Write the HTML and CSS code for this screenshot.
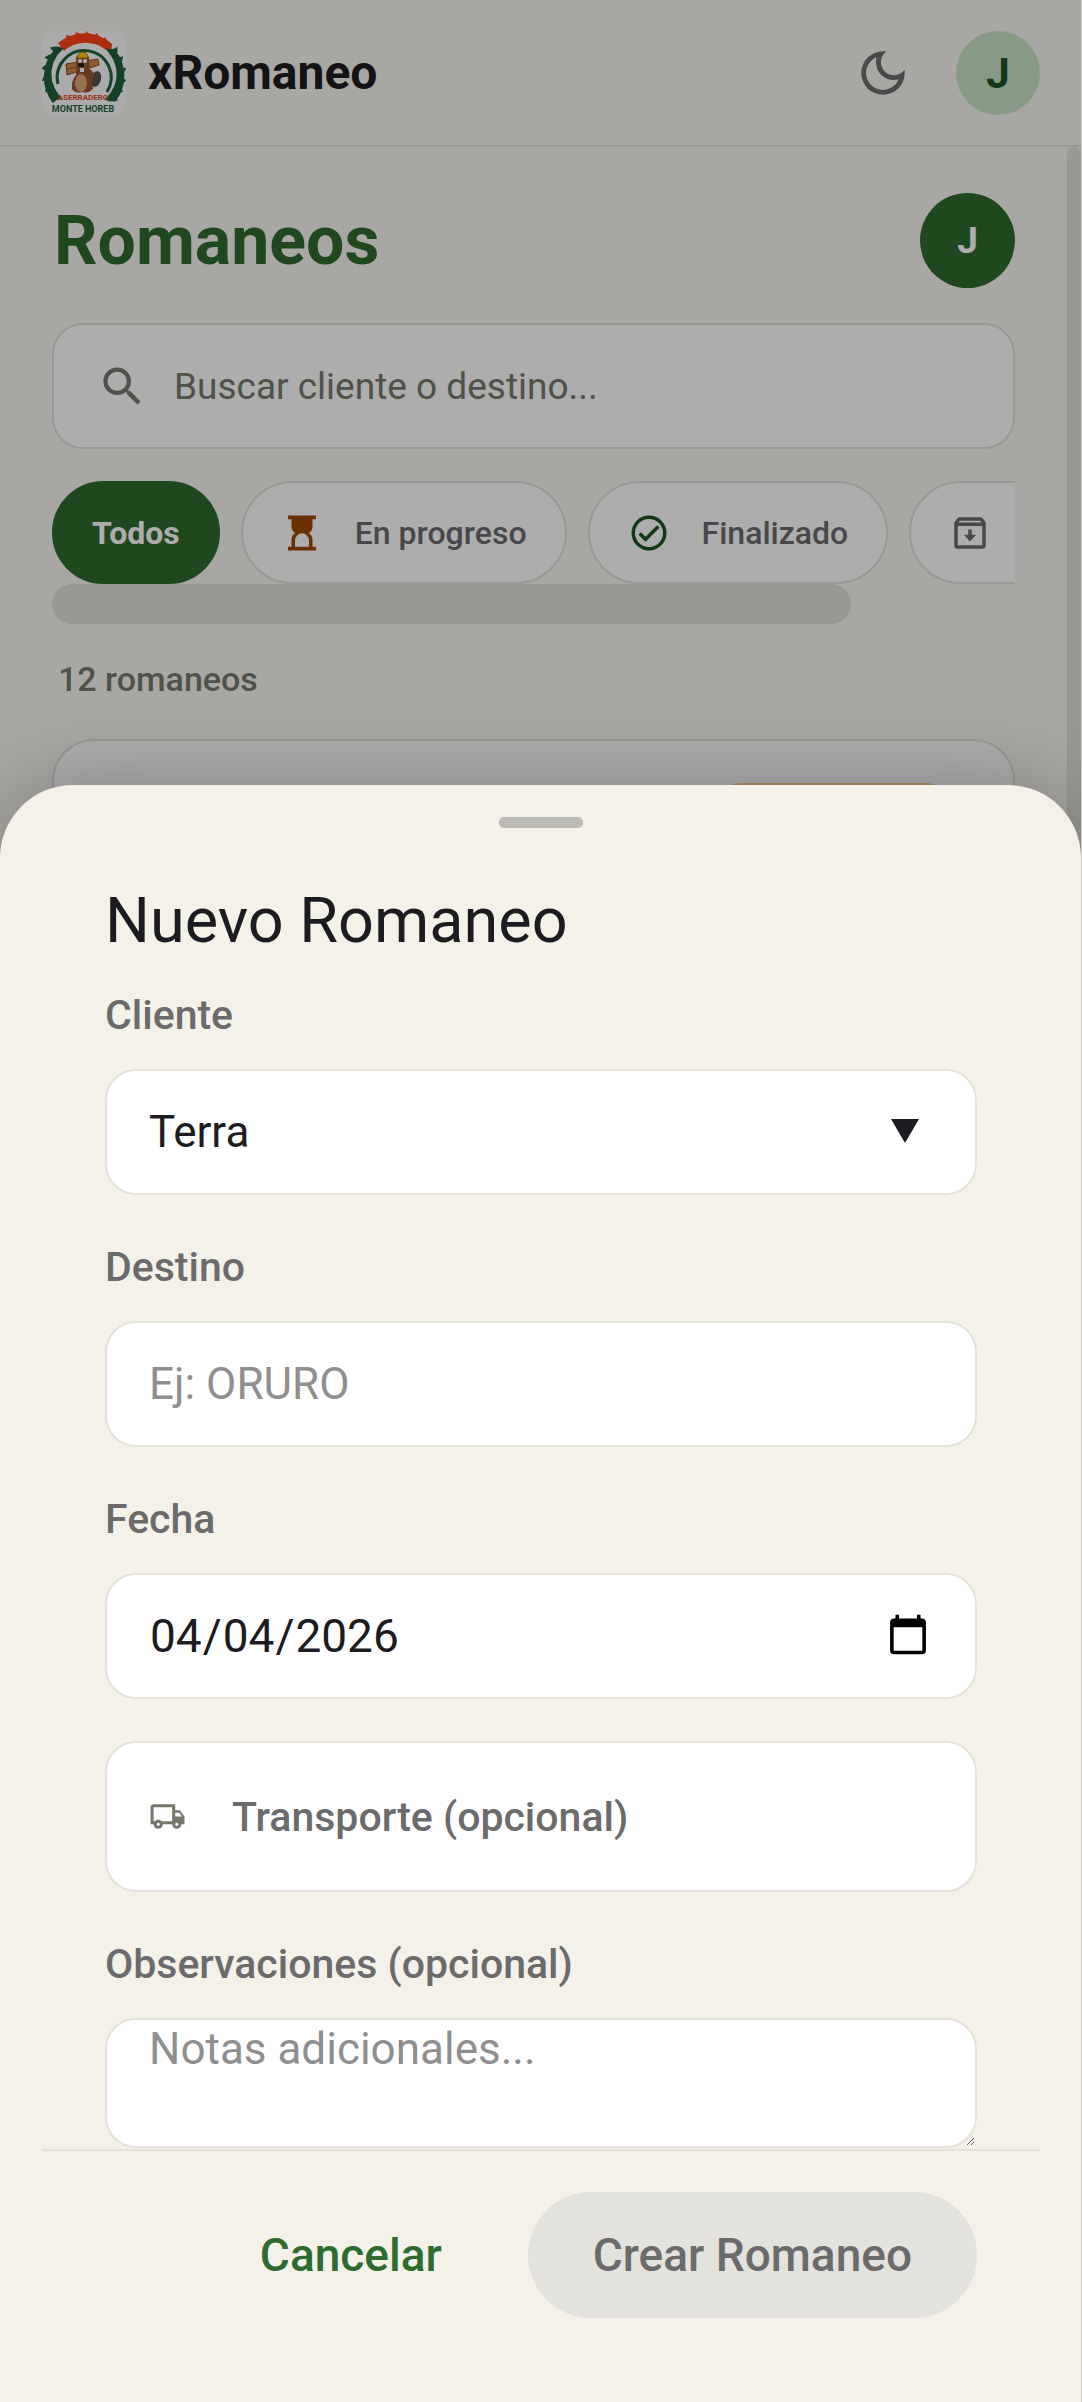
FILE: index.html
```html
<!DOCTYPE html>
<html lang="es">
<head>
  <meta charset="UTF-8" />
  <meta name="viewport" content="width=device-width, initial-scale=1" />
  <title>xRomaneo</title>
  <link rel="stylesheet" href="styles.css">
</head>
<body>
  <div class="app">
    <header class="topbar">
      <svg class="logo" viewBox="0 0 84 84" role="img" aria-label="Aserradero Monte Horeb">
        <defs>
          <path id="tooth" d="M35 10 Q41 7 41 0 Q48 4 49 11 Z" />
        </defs>
        <rect width="84" height="84" rx="16" fill="#fdfdff" />
        <!-- saw blade -->
        <g fill="#ff4417">
          <path d="M22 20 A33 33 0 0 1 63 18 L69 22 L70 13 A41 41 0 0 0 16 12 Z" />
          <use href="#tooth" transform="rotate(-24 42 43)" />
          <use href="#tooth" transform="rotate(-10 42 43)" />
          <use href="#tooth" transform="rotate(4 42 43)" />
          <use href="#tooth" transform="rotate(18 42 43)" />
          <use href="#tooth" transform="rotate(31 42 43)" />
        </g>
        <g fill="#1c6238">
          <path d="M20 18 A34 34 0 0 0 17 67 L11 72 A41 41 0 0 1 12 19 Z" />
          <path d="M67 20 A34 34 0 0 1 68 66 L73 71 A41 41 0 0 0 74 20 Z" />
          <use href="#tooth" transform="rotate(-51 42 43)" />
          <use href="#tooth" transform="rotate(-66 42 43)" />
          <use href="#tooth" transform="rotate(-82 42 43)" />
          <use href="#tooth" transform="rotate(-98 42 43)" />
          <use href="#tooth" transform="rotate(-114 42 43)" />
          <use href="#tooth" transform="rotate(-129 42 43)" />
          <use href="#tooth" transform="rotate(52 42 43)" />
          <use href="#tooth" transform="rotate(67 42 43)" />
          <use href="#tooth" transform="rotate(83 42 43)" />
          <use href="#tooth" transform="rotate(99 42 43)" />
          <use href="#tooth" transform="rotate(115 42 43)" />
          <use href="#tooth" transform="rotate(129 42 43)" />
        </g>
        <path d="M16 53 A27 27 0 1 1 65 61" fill="none" stroke="#1c6238" stroke-width="3" />
        <!-- beaver -->
        <ellipse cx="54" cy="48" rx="5" ry="8" fill="#54514d" transform="rotate(15 54 48)" />
        <path d="M24 33 L56 28 L57 34 L25 44 Z" fill="#d08a4a" stroke="#8a4f22" />
        <path d="M25 38 L35 36" stroke="#8a4f22" />
        <path d="M34 26 Q40 20 47 26 L48 38 Q55 44 50 48 L51 58 Q46 63 41 61 Q33 63 30 58 Q29 50 34 44 Z" fill="#9a5434" />
        <ellipse cx="39" cy="52" rx="6" ry="9" fill="#dfa878" />
        <path d="M35 27 Q36 21 41 21 Q46 22 46 27 Z" fill="#ffc800" stroke="#a87800" />
        <circle cx="38" cy="30" r="2" fill="#fff" />
        <circle cx="43" cy="30" r="2" fill="#fff" />
        <ellipse cx="39" cy="34" rx="3" ry="2" fill="#1a1a1a" />
        <path d="M38 37 h4 v4 h-4 Z" fill="#fff" />
        <text class="logo-top" x="41" y="69">ASERRADERO</text>
        <text class="logo-bottom" x="41" y="81">MONTE HOREB</text>
      </svg>
      <span class="brand">xRomaneo</span>
      <button class="theme-btn" type="button" aria-label="Cambiar tema">
        <svg width="58" height="58" viewBox="0 0 24 24" fill="currentColor"><path d="M9.37 5.51A7.35 7.35 0 0 0 9.1 7.5c0 4.08 3.32 7.4 7.4 7.4.68 0 1.35-.09 1.99-.27A7.014 7.014 0 0 1 12 19c-3.86 0-7-3.14-7-7 0-2.93 1.81-5.45 4.37-6.49zM12 3a9 9 0 1 0 9 9c0-.46-.04-.92-.1-1.36a5.389 5.389 0 0 1-4.4 2.26 5.403 5.403 0 0 1-3.14-9.8c-.44-.06-.9-.1-1.36-.1z" /></svg>
      </button>
      <button class="avatar avatar-soft" type="button">J</button>
    </header>

    <main class="content">
      <div class="title-row">
        <h1>Romaneos</h1>
        <button class="avatar avatar-strong" type="button">J</button>
      </div>

      <label class="search">
        <svg width="51" height="51" viewBox="0 0 24 24" fill="currentColor" aria-hidden="true"><path d="M15.5 14h-.79l-.28-.27A6.471 6.471 0 0 0 16 9.5 6.5 6.5 0 1 0 9.5 16c1.61 0 3.09-.59 4.23-1.57l.27.28v.79l5 4.99L20.49 19l-4.99-5zm-6 0C7.01 14 5 11.99 5 9.5S7.01 5 9.5 5 14 7.01 14 9.5 11.99 14 9.5 14z" /></svg>
        <input type="search" placeholder="Buscar cliente o destino..." aria-label="Buscar cliente o destino">
      </label>

      <div class="chips">
        <button class="chip chip-active" type="button">Todos</button>
        <button class="chip" type="button">
          <svg class="icon-progress" width="42" height="42" viewBox="0 0 24 24" fill="currentColor"><path d="M4 2h16v2.200h-2v4.300c0 1.500-1 3-2.300 3.500 1.300.6 2.300 2 2.300 3.500v4.300h2V22H4v-2.200h2v-4.300c0-1.500 1-2.900 2.300-3.500C7 11.500 6 10 6 8.500V4.200H4zM8 19.800h8v-3.600a4 4 0 0 0-8 0z" /></svg>
          En progreso
        </button>
        <button class="chip" type="button">
          <svg class="icon-done" width="42" height="42" viewBox="0 0 24 24" fill="currentColor"><path d="M16.590 7.580 10 14.170l-2.590-2.580L6 13l4 4 8-8zM12 2a10 10 0 1 0 0 20 10 10 0 0 0 0-20zm0 18a8 8 0 1 1 0-16 8 8 0 0 1 0 16z" /></svg>
          Finalizado
        </button>
        <button class="chip chip-archive" type="button" aria-label="Archivado">
          <svg width="42" height="42" viewBox="0 0 24 24" fill="currentColor"><path d="m20.540 5.230-1.390-1.680A1.450 1.450 0 0 0 18 3H6c-.47 0-.88.21-1.160.55L3.460 5.230C3.170 5.570 3 6.020 3 6.500V19a2 2 0 0 0 2 2h14a2 2 0 0 0 2-2V6.500c0-.48-.17-.93-.46-1.270zM6.240 5h11.520l.81.970H5.440zM5 19V8h14v11zm8-9h-2v3H8.500l3.500 3.800 3.500-3.800H13z" /></svg>
        </button>
      </div>
      <div class="chips-scroll" aria-hidden="true"></div>

      <p class="count">12 romaneos</p>

      <article class="card">
        <span class="badge"></span>
      </article>
    </main>
    <div class="page-scroll" aria-hidden="true"></div>
  </div>

  <div class="backdrop"></div>

  <section class="sheet" role="dialog" aria-labelledby="sheet-title">
    <div class="handle"></div>
    <form class="sheet-form" id="nuevo">
      <h2 id="sheet-title">Nuevo Romaneo</h2>

      <div class="field">
        <label for="cliente">Cliente</label>
        <div class="select-wrap">
          <select id="cliente">
            <option>Terra</option>
          </select>
          <svg class="arrow" width="28" height="24" viewBox="0 0 28 24" aria-hidden="true"><path d="M0 0h28L14 24z" fill="#1c1b1f" /></svg>
        </div>
      </div>

      <div class="field">
        <label for="destino">Destino</label>
        <input type="text" id="destino" placeholder="Ej: ORURO">
      </div>

      <div class="field">
        <label for="fecha">Fecha</label>
        <input type="date" id="fecha" value="2026-04-04">
      </div>

      <button class="transport" type="button">
        <svg width="37" height="37" viewBox="0 0 24 24" fill="currentColor" aria-hidden="true"><path d="M20 8h-3V4H3c-1.100 0-2 .9-2 2v11h2a3 3 0 1 0 6 0h6a3 3 0 1 0 6 0h2v-5zm-.5 1.500 1.960 2.500H17V9.500zM6 18a1 1 0 1 1 0-2 1 1 0 0 1 0 2zm2.220-3a2.980 2.980 0 0 0-4.440 0H3V6h12v9zM18 18a1 1 0 1 1 0-2 1 1 0 0 1 0 2z" /></svg>
        Transporte (opcional)
      </button>

      <div class="field">
        <label for="notas">Observaciones (opcional)</label>
        <textarea id="notas" placeholder="Notas adicionales..."></textarea>
      </div>
    </form>

    <footer class="actions">
      <button class="btn btn-text" type="button">Cancelar</button>
      <button class="btn btn-filled" type="submit" form="nuevo" disabled>Crear Romaneo</button>
    </footer>
  </section>
</body>
</html>
```
FILE: styles.css
```css
* {
  box-sizing: border-box;
}

body {
  margin: 0;
  height: 100vh;
  overflow: hidden;
  position: relative;
  background: #cfcdc9;
  font-family: Roboto, "Open Sans", sans-serif;
  color: #1c1b1f;
}

button, input, select, textarea {
  font-family: inherit;
  color: inherit;
  margin: 0;
}

button {
  border: none;
  background: none;
  padding: 0;
}

svg {
  display: block;
  flex: none;
}

.app {
  position: relative;
  height: 100%;
  margin-right: 1px;
  overflow: hidden;
  background: #f8f7f1;
}

/* top bar */
.topbar {
  display: flex;
  align-items: center;
  padding: 31px 41px 30px 42px;
  border-bottom: 2px solid #e2e0d8;
}

.logo {
  width: 84px;
  height: 84px;
}

.logo-top, .logo-bottom {
  font-size: 8px;
  font-weight: 700;
  text-anchor: middle;
  fill: #e04a20;
}

.logo-bottom {
  font-size: 9px;
  fill: #1c6238;
}

.brand {
  flex: 1;
  margin-left: 22px;
  font-size: 48px;
  line-height: 56px;
  font-weight: 700;
}

.theme-btn {
  margin-right: 44px;
  color: #6d6d6d;
}

.avatar {
  border-radius: 50%;
  font-weight: 700;
}

.avatar-soft {
  width: 84px;
  height: 84px;
  background: #c8e4c5;
  color: #1b5520;
  font-size: 42px;
}

.avatar-strong {
  width: 95px;
  height: 95px;
  background: #2e6b2e;
  color: #fff;
  font-size: 37px;
}

/* list page */
.content {
  padding: 46px 66px 0 52px;
}

.title-row {
  display: flex;
  align-items: center;
  justify-content: space-between;
}

h1 {
  margin: 0 0 0 2px;
  font-size: 68px;
  line-height: 80px;
  color: #2e6b2e;
}

.search {
  display: flex;
  align-items: center;
  height: 126px;
  margin-top: 35px;
  padding: 0 43px;
  border: 2px solid #e2e0d8;
  border-radius: 31px;
  background: #fff;
  color: #75796c;
}

.search input {
  flex: 1;
  min-width: 0;
  margin-left: 26px;
  padding: 0;
  border: none;
  background: none;
  font-size: 37px;
}

.search input::placeholder {
  color: #75796c;
}

.chips {
  display: flex;
  gap: 21px;
  margin-top: 32px;
  overflow: hidden;
}

.chip {
  display: flex;
  flex: none;
  align-items: center;
  gap: 32px;
  height: 103px;
  padding: 0 38px;
  border: 2px solid #e2e0d8;
  border-radius: 52px;
  background: #fff;
  color: #6b6b6d;
  font-size: 32px;
  font-weight: 500;
}

.chip-active {
  border-color: #2e6b2e;
  background: #2e6b2e;
  color: #fff;
  font-weight: 700;
}

/* runs past the edge of the row */
.chip-archive {
  width: 300px;
}

.icon-progress {
  color: #9e4800;
}

.icon-done {
  color: #1b5520;
}

.chips-scroll {
  width: 83%;
  height: 40px;
  border-radius: 20px;
  background: #e2e0d8;
}

.count {
  margin: 35px 6px 40px;
  font-size: 34px;
  line-height: 40px;
  font-weight: 500;
  color: #75796c;
}

.card {
  height: 300px;
  padding: 42px 56px;
  border: 2px solid #e2e0d8;
  border-radius: 42px;
  background: #fff;
}

.badge {
  display: block;
  width: 246px;
  height: 63px;
  margin-left: auto;
  border-radius: 32px;
  background: #ffd08a;
}

.page-scroll {
  position: absolute;
  top: 147px;
  right: 0;
  width: 14px;
  height: 70%;
  border-radius: 7px;
  background: #e2e0d8;
}

.backdrop {
  position: absolute;
  inset: 0 1px 0 0;
  background: rgba(0, 0, 0, 0.32);
}

/* bottom sheet */
.sheet {
  position: absolute;
  left: 0;
  right: 1px;
  bottom: 0;
  padding: 32px 41px 84px 42px;
  border-radius: 73px 73px 0 0;
  background: #f4f1e9;
  box-shadow: 0 0 84px rgba(0, 0, 0, 0.25);
  clip-path: inset(-200px 0 0 0);
}

.handle {
  width: 84px;
  height: 11px;
  margin: 0 auto;
  border-radius: 5px;
  background: #bcbbb6;
}

.sheet-form {
  padding: 57px 63px 1px;
}

h2 {
  margin: 0 0 34px;
  font-size: 63px;
  line-height: 72px;
  font-weight: 400;
}

.field + .field, .transport + .field {
  margin-top: 48px;
}

.field label {
  display: block;
  margin-bottom: 30px;
  font-size: 41px;
  line-height: 48px;
  font-weight: 500;
  color: #6b6b6b;
}

.field input, .field select, .field textarea, .transport {
  display: block;
  width: 100%;
  height: 126px;
  padding: 0 42px;
  border: 2px solid #e5e2db;
  border-radius: 31px;
  background: #fff;
  font-size: 44px;
}

.field input[type="date"] {
  font-size: 46px;
}

.field ::placeholder {
  color: #8f8f8f;
}

.select-wrap {
  position: relative;
}

.field select {
  appearance: none;
}

.arrow {
  position: absolute;
  top: 50px;
  right: 58px;
  pointer-events: none;
}

.field textarea {
  height: 130px;
  padding-top: 4px;
  line-height: 50px;
}

.transport {
  display: flex;
  align-items: center;
  gap: 46px;
  height: 151px;
  margin-top: 42px;
  color: #6b6b6b;
  font-size: 41px;
  font-weight: 500;
}

.transport svg {
  color: #75796c;
}

.actions {
  display: flex;
  justify-content: flex-end;
  gap: 21px;
  padding: 41px 63px 0;
  border-top: 2px solid #e5e2db;
}

.btn {
  height: 126px;
  padding: 0 65px;
  border-radius: 63px;
  font-size: 46px;
  font-weight: 500;
}

.btn-text {
  color: #2e6b2e;
}

.btn-filled {
  background: #e3e2dd;
  color: #6b6b6b;
}
```
